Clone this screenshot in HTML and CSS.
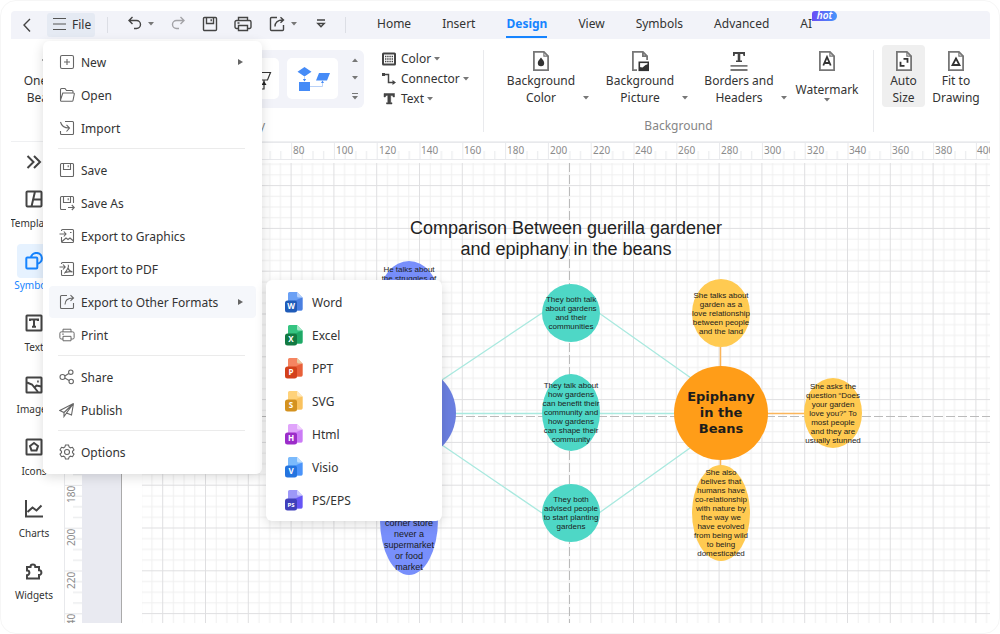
FILE: index.html
```html
<!DOCTYPE html>
<html lang="en">
<head>
<meta charset="utf-8">
<title>Diagram editor</title>
<link rel="stylesheet" href="styles.css">
</head>
<body>
<svg class="sprite" aria-hidden="true">
  <symbol id="save" viewBox="0 0 16 16"><path d="M1.5 2.5a1 1 0 0 1 1-1h11a1 1 0 0 1 1 1v11a1 1 0 0 1-1 1h-11a1 1 0 0 1-1-1zM4.5 1.5v6h7v-6M9.2 3.2v2"/></symbol>
  <symbol id="print" viewBox="0 0 18 16"><path d="M4.5 4.5v-3h9v3M4.5 12.5h-2a1.5 1.5 0 0 1-1.5-1.500v-5a1.500 1.500 0 0 1 1.500-1.500h13a1.500 1.500 0 0 1 1.500 1.500v5a1.500 1.500 0 0 1-1.500 1.500h-2M4.500 9.500h9v5h-9zM3.500 7h2"/></symbol>
  <symbol id="export" viewBox="0 0 16 16"><path d="M8 1.500H2.500a1 1 0 0 0-1 1v11a1 1 0 0 0 1 1h11a1 1 0 0 0 1-1V9M6 10.500C6 6.500 8.500 4 14 4M11.500 1.200 14.500 4l-3 2.800"/></symbol>
  <symbol id="doc" viewBox="0 0 18 22"><path fill="#fff" stroke="#777" stroke-width="1.800" d="M1.900 1.900h10l4.200 4.200v14H1.900z"/><path fill="none" stroke="#777" stroke-width="1.200" d="M11.900 2v4.200h4"/></symbol>
  <symbol id="caret" viewBox="0 0 6 4"><path d="M0 0h6L3 3.500z"/></symbol>
</svg>

<div class="shell">
  <header class="topbar">
    <button class="tool back" aria-label="Back"><svg viewBox="0 0 16 16"><path d="M11 2 5 8l6 6.500"/></svg></button>
    <button class="file"><svg class="line" viewBox="0 0 14 14"><path d="M0 1.500h13M0 7h13M0 12.500h13"/></svg>File</button>
    <span class="bar-sep"></span>
    <div class="quick">
      <div class="split">
        <button class="tool" aria-label="Undo"><svg viewBox="0 0 16 16"><path d="M5.500 1 2 4.500 5.500 8M2 4.500h7.500a4 4 0 0 1 0 8H7"/></svg></button>
        <button class="drop" aria-label="Undo history"><svg><use href="#caret"/></svg></button>
      </div>
      <button class="tool faded" aria-label="Redo"><svg viewBox="0 0 16 16"><path d="M10.500 1 14 4.500 10.500 8M14 4.500H6.500a4 4 0 0 0 0 8H9"/></svg></button>
      <button class="tool" aria-label="Save"><svg><use href="#save"/></svg></button>
      <button class="tool wide" aria-label="Print"><svg><use href="#print"/></svg></button>
      <div class="split">
        <button class="tool wide" aria-label="Export"><svg><use href="#export"/></svg></button>
        <button class="drop" aria-label="Export options"><svg><use href="#caret"/></svg></button>
      </div>
      <button class="tool" aria-label="More"><svg viewBox="0 0 16 16"><path d="M4 4h8M4.800 7.500h6.400L8 10.800z"/></svg></button>
    </div>
    <span class="bar-sep"></span>
    <nav class="tabs">
      <a href="#">Home</a><a href="#">Insert</a><a href="#" class="current">Design</a><a href="#">View</a><a href="#">Symbols</a><a href="#">Advanced</a><a href="#" class="ai">AI<span class="hot">hot</span></a>
    </nav>
  </header>

  <section class="ribbon">
    <div class="group beautify">
      <div class="group-body">
        <button class="big"><svg class="big-icon line" viewBox="0 0 18 22"><path d="M9 3v16M1 10h16"/></svg>One Click<br>Beautify</button>
        <div class="gallery">
          <span class="card"></span><span class="card"></span>
          <button class="card" aria-label="Outline style"><svg viewBox="0 0 51 41"><g fill="none" stroke="#333" stroke-width="1.200"><path d="M30 14.500h12.500l-3 7.500H27z"/><path d="M36 22v9H24"/></g><path d="M33.500 27 36 23l2.500 4z" fill="#222"/></svg></button>
          <button class="card" aria-label="Filled style"><svg viewBox="0 0 51 41"><path d="m17.500 9 7 4.700-7 4.700-7-4.700zM12 24h11v9H12zM32 15h11l-3 7.500H29z" fill="#458bf7"/><path d="M17.500 18v5M23 28.500h12.500V24" fill="none" stroke="#b9d1f7"/><path d="M15.800 21h3.400l-1.700 2.500zM34 25h3l-1.500-2.500z" fill="#458bf7"/></svg></button>
          <div class="scroller">
            <button class="drop" aria-label="Scroll up"><svg viewBox="0 0 6 4"><path d="M0 4h6L3 .5z"/></svg></button>
            <button class="drop" aria-label="Scroll down"><svg><use href="#caret"/></svg></button>
            <button class="drop tall" aria-label="Show all"><svg viewBox="0 0 6 7"><path d="M0 0h6v1H0zM0 3h6L3 6.500z"/></svg></button>
          </div>
        </div>
        <div class="lines">
          <button><svg class="row-icon" viewBox="0 0 14 14"><rect x="1" y="1.500" width="12" height="11" rx=".5" fill="#fff" stroke="#444" stroke-width="2"/><path d="M3 4.500h8M3 7h8M3 9.500h8" stroke="#444" stroke-width="1.300" stroke-dasharray="1.400 .8"/></svg>Color<svg class="caret"><use href="#caret"/></svg></button>
          <button><svg class="row-icon" viewBox="0 0 14 14"><path d="M3 2.500h3.500v8h5" fill="none" stroke="#444" stroke-width="1.500"/><path d="M0 1h3v3H0zM10.500 8l3.500 2.500-3.500 2.500z" fill="#444"/></svg>Connector<svg class="caret"><use href="#caret"/></svg></button>
          <button><svg class="row-icon" viewBox="0 0 14 14"><path d="M2 1.500h10.500V5h-1.300l-.7-1.500H8.700v7.200h1.300v1.300H4.500v-1.300h1.300V3.500H4L3.300 5H2z" fill="#444" stroke="#444" stroke-width=".5"/></svg>Text<svg class="caret"><use href="#caret"/></svg></button>
        </div>
      </div>
      <p class="group-name">Beautify</p>
    </div>

    <div class="group background">
      <div class="group-body">
        <button class="big with-drop"><svg class="big-icon"><use href="#doc"/><path d="M9 7.500c2 2.500 3.200 3.900 3.200 5.500a3.200 3.200 0 0 1-6.400 0c0-1.600 1.200-3 3.200-5.500z" fill="#333"/></svg><span>Background<br>Color</span><svg class="caret"><use href="#caret"/></svg></button>
        <button class="big with-drop"><svg class="big-icon" viewBox="0 0 18 22"><path d="M6 20.100H1.900V1.900h10l4.200 4.200V10M11.900 2v4.200h4" fill="none" stroke="#777" stroke-width="1.800"/><rect x="8.300" y="12.300" width="9" height="8" fill="#fff" stroke="#333" stroke-width="1.600"/><path d="M8.500 20v-3l3 .5 3-2.500 3-1v6z" fill="#333"/></svg><span>Background<br>Picture</span><svg class="caret"><use href="#caret"/></svg></button>
        <button class="big with-drop"><svg class="big-icon" viewBox="0 0 18 22"><path d="M3 2h12v4h-1.500L13 4h-2.700v6.500H12V12H6v-1.500h1.700V4H5l-.5 2H3z" fill="#444"/><path d="M.5 15.800h17M.5 20h17" stroke="#777" stroke-width="1.800"/></svg><span>Borders and<br>Headers</span><svg class="caret"><use href="#caret"/></svg></button>
        <button class="big watermark"><svg class="big-icon"><use href="#doc"/><path d="M5.300 15.500 9 7l3.700 8.500M6.500 13h5" fill="none" stroke="#333" stroke-width="1.800"/></svg><span>Watermark</span><svg class="caret"><use href="#caret"/></svg></button>
      </div>
      <p class="group-name">Background</p>
    </div>

    <div class="group size">
      <div class="group-body">
        <button class="big pressed"><svg class="big-icon"><use href="#doc"/><path d="M8.500 8.800h4v4M5.500 11.800v4h4" fill="none" stroke="#333" stroke-width="1.800"/></svg>Auto<br>Size</button>
        <button class="big"><svg class="big-icon"><use href="#doc"/><path d="M9 8.500 12.500 15h-7z" fill="none" stroke="#333" stroke-width="1.800"/></svg>Fit to<br>Drawing</button>
      </div>
    </div>
  </section>

  <main class="work">
    <aside class="side">
      <button class="expand" aria-label="Expand"><svg viewBox="0 0 16 14"><path d="m1.500 1 6 6-6 6M8 1l6 6-6 6"/></svg></button>
      <button class="side-item"><span class="side-icon"><svg viewBox="0 0 18 18"><path d="M1.500 2.500a1 1 0 0 1 1-1h13a1 1 0 0 1 1 1v13a1 1 0 0 1-1 1h-13a1 1 0 0 1-1-1zM10 1.500 6.500 16.500M8.500 9.500h8"/></svg></span>Templates</button>
      <button class="side-item active"><span class="side-icon"><svg viewBox="0 0 18 18"><rect x="1.300" y="5.500" width="11" height="11" rx="1"/><path d="M6 5.200a5.500 5.500 0 1 1 6.500 6.600"/></svg></span>Symbols</button>
      <button class="side-item"><span class="side-icon"><svg viewBox="0 0 18 18"><rect x="1.500" y="1.500" width="15" height="15" rx=".5"/><path d="M5 7V5.500h8V7M9 5.500v7M7 12.700h4"/></svg></span>Text</button>
      <button class="side-item"><span class="side-icon"><svg viewBox="0 0 18 18"><rect x="1.500" y="1.500" width="15" height="15" rx=".5"/><path d="m2 6.500 5 2 6 7.500M9 12l2.500-2.500 5 1M12.200 5.500h1.500"/></svg></span>Images</button>
      <button class="side-item"><span class="side-icon"><svg viewBox="0 0 18 18"><rect x="1.500" y="1.500" width="15" height="15" rx=".5"/><path d="m9 5 4 3-1.500 4.500h-5L5 8z"/></svg></span>Icons</button>
      <button class="side-item"><span class="side-icon"><svg viewBox="0 0 18 18"><path d="M1 0v16.500h17M2.500 12l5-4.500 4 3 5-5"/></svg></span>Charts</button>
      <button class="side-item"><span class="side-icon"><svg viewBox="0 0 18 18"><path d="M2 5h3.500a2.400 2.400 0 1 1 4.800 0H14v3.300a2.400 2.400 0 1 1 0 4.800v3.400H2v-3.300a2.400 2.400 0 1 0 0-4.800z"/></svg></span>Widgets</button>
    </aside>

    <div class="editor">
      <svg class="ruler-x">
        <defs><pattern id="tx" width="42.800" height="18" patternUnits="userSpaceOnUse" x="13.100"><path d="M.5 0v18M11.200 9v9M21.900 9v9M32.600 9v9" stroke="#e8e9ec"/></pattern></defs>
        <rect width="100%" height="18" fill="url(#tx)"/><path class="edge" d="M0 .5h2000M0 17.500h2000"/>
        <g><text x="229" y="12">80</text><text x="272" y="12">100</text><text x="315" y="12">120</text><text x="357" y="12">140</text><text x="400" y="12">160</text><text x="443" y="12">180</text><text x="486" y="12">200</text><text x="529" y="12">220</text><text x="571" y="12">240</text><text x="614" y="12">260</text><text x="657" y="12">280</text><text x="700" y="12">300</text><text x="743" y="12">320</text><text x="785" y="12">340</text><text x="828" y="12">360</text><text x="871" y="12">380</text><text x="913" y="12">400</text></g>
      </svg>
      <svg class="ruler-y">
        <defs><pattern id="ty" width="18" height="42.800" patternUnits="userSpaceOnUse" y="25.300"><path d="M0 .5h18M9 11.200h9M9 21.900h9M9 32.600h9" stroke="#e4e5e8"/></pattern></defs>
        <rect width="18" height="100%" fill="url(#ty)"/><path class="edge" d="M.5 0v2000"/>
        <text transform="translate(11 343) rotate(-90)">180</text><text transform="translate(11 386) rotate(-90)">200</text><text transform="translate(11 429) rotate(-90)">220</text><text transform="translate(11 471) rotate(-90)">240</text>
      </svg>
      <div class="canvas">
        <svg class="drawing">
          <defs>
            <pattern id="grid" width="42.800" height="42.800" patternUnits="userSpaceOnUse" x="37.400" y="25.100"><path d="M11.200 0v42.800M21.900 0v42.800M32.600 0v42.800M0 11.200h42.800M0 21.900h42.800M0 32.600h42.800" stroke="#efeff0"/><path d="M.5 0v42.800M0 .5h42.800" stroke="#dfdfe1"/></pattern>
          </defs>
          <rect width="39" height="100%" fill="#e9eaf1"/><path d="M39.500 0v2000" stroke="#aaa"/>
          <rect x="60" y="3" width="100%" height="100%" fill="url(#grid)"/>
          <path d="M487.500 3v2000M60 256.500h2000" stroke="#bbb" stroke-dasharray="9 3" fill="none"/>
          <g transform="translate(-82 -160)" fill="none">
            <path stroke="#a9e9df" stroke-width="1.300" d="M599 313l92 65M542 313l-100 67M599 513l91-65M542 513l-100-68M456 413.500h218"/>
            <path stroke="#fbb55a" stroke-width="1.500" d="M720.500 347v20M720.500 459v7M767 413.500h38"/>
          </g>
        </svg>
        <h1 class="title">Comparison Between guerilla gardener<br>and epiphany in the beans</h1>
        <div class="node blue n-top">He talks about<br>the struggles of</div>
        <div class="node core n-left"></div>
        <div class="node blue n-low">corner store<br>never a<br>supermarket<br>or food<br>market</div>
        <div class="node teal n-t1">They both talk<br>about gardens<br>and their<br>communities</div>
        <div class="node teal n-t2">They talk about<br>how gardens<br>can benefit their<br>community and<br>how gardens<br>can shape their<br>community</div>
        <div class="node teal n-t3">They both<br>advised people<br>to start planting<br>gardens</div>
        <div class="node yellow n-y1">She talks about<br>garden as a<br>love relationship<br>between people<br>and the land</div>
        <div class="node yellow n-y2">She asks the<br>question “Does<br>your garden<br>love you?” To<br>most people<br>and they are<br>usually stunned</div>
        <div class="node yellow n-y3">She also<br>belives that<br>humans have<br>co-relationship<br>with nature by<br>the way we<br>have evolved<br>from being wild<br>to being<br>domesticated</div>
        <div class="node core n-right">Epiphany<br>in the<br>Beans</div>
      </div>
    </div>
  </main>

  <div class="menu file-menu">
    <button><svg viewBox="0 0 16 16"><rect x="1.500" y="1.500" width="13" height="13" rx="1.500"/><path d="M8 5v6M5 8h6"/></svg>New<i></i></button>
    <button><svg viewBox="0 0 16 16"><path d="M1.500 13V2.500a1 1 0 0 1 1-1h3.500l1.500 2h5.500a1 1 0 0 1 1 1V6M3.800 6h10.700a.8.8 0 0 1 .8 1l-1.300 6.500a1 1 0 0 1-1 .8H2.500a1 1 0 0 1-1-1.200z"/></svg>Open</button>
    <button><svg viewBox="0 0 16 16"><path d="M6 1.500h7.500a1 1 0 0 1 1 1v11a1 1 0 0 1-1 1h-11a1 1 0 0 1-1-1V11M1.500 2c1 4 3.500 6 8.500 6M7.500 4.800 10.500 8l-3 3.500"/></svg>Import</button>
    <hr>
    <button><svg><use href="#save"/></svg>Save</button>
    <button><svg viewBox="0 0 16 16"><path d="M7 14.500H2.500a1 1 0 0 1-1-1v-11a1 1 0 0 1 1-1h11a1 1 0 0 1 1 1V8M4.500 1.500v6h7v-6M9.200 3.200v2M9 12.500h6M12.800 10l2.500 2.500-2.500 2.500"/></svg>Save As</button>
    <button><svg viewBox="0 0 16 16"><path d="M2.500 3v-.5a1 1 0 0 1 1-1h10a1 1 0 0 1 1 1v11a1 1 0 0 1-1 1h-10a1 1 0 0 1-1-1V9M.5 6H7M4.800 3.500 7 6 4.800 8.500M3 13.500l4-3.500 2 1.500 2-1.500 3.500 3M11 4.500h1.500"/></svg>Export to Graphics</button>
    <button><svg viewBox="0 0 16 16"><path d="M2.500 3v-.5a1 1 0 0 1 1-1h10a1 1 0 0 1 1 1v11a1 1 0 0 1-1 1h-10a1 1 0 0 1-1-1V9M.5 6H6M4 3.500 6.200 6 4 8.500M8.800 4c1.500 0 .5 4-3.500 8.500M9 7c.5 2 2.500 3.500 4.500 4-2-.8-4.500-.3-7 .5"/></svg>Export to PDF</button>
    <button class="hover"><svg><use href="#export"/></svg>Export to Other Formats<i></i></button>
    <button><svg><use href="#print"/></svg>Print</button>
    <hr>
    <button><svg viewBox="0 0 16 16"><circle cx="3.500" cy="8" r="2.500"/><circle cx="11.800" cy="3.200" r="2.200"/><circle cx="12.200" cy="12.500" r="2.200"/><path d="m5.800 7 4-2.500M5.800 9l4.300 2.500"/></svg>Share</button>
    <button><svg viewBox="0 0 16 16"><path d="M14.500 1.500.8 8.500 5 10.500zM14.500 1.500l-2 11.500-5-2zM14.500 1.500 5 10.500v4l2.500-3.500"/></svg>Publish</button>
    <hr>
    <button><svg viewBox="0 0 16 16"><path d="m6.500 1h3l.6 2 1.300.8 2.100-.5 1.500 2.600L13.500 7.300v1.400l1.500 1.400-1.500 2.600-2.100-.5-1.300.8-.6 2h-3l-.6-2-1.300-.8-2.100.5L1 10.100l1.500-1.400V7.300L1 5.900l1.500-2.600 2.100.5L5.900 3z"/><circle cx="8" cy="8" r="2.500"/></svg>Options</button>
  </div>

  <div class="menu formats">
    <button class="f-word"><svg viewBox="0 0 18 22"><path class="a" d="M4.500 1H12l5.500 5.500V18a1.500 1.500 0 0 1-1.500 1.500H4.500A1.500 1.500 0 0 1 3 18V2.500A1.500 1.500 0 0 1 4.500 1z"/><path class="b" d="M17.500 6.500V18a1.500 1.500 0 0 1-1.500 1.500H9V10z"/><path class="c" d="M12 1v4a1.500 1.500 0 0 0 1.500 1.500h4z"/><rect class="d" y="9.500" width="12" height="12" rx="2.500"/><text x="6" y="18">W</text></svg>Word</button>
    <button class="f-excel"><svg viewBox="0 0 18 22"><path class="a" d="M4.500 1H12l5.500 5.500V18a1.500 1.500 0 0 1-1.500 1.500H4.500A1.500 1.500 0 0 1 3 18V2.500A1.500 1.500 0 0 1 4.500 1z"/><path class="b" d="M17.500 6.500V18a1.500 1.500 0 0 1-1.500 1.500H9V10z"/><path class="c" d="M12 1v4a1.500 1.500 0 0 0 1.500 1.500h4z"/><rect class="d" y="9.500" width="12" height="12" rx="2.500"/><text x="6" y="18">X</text></svg>Excel</button>
    <button class="f-ppt"><svg viewBox="0 0 18 22"><path class="a" d="M4.500 1H12l5.500 5.500V18a1.500 1.500 0 0 1-1.500 1.500H4.500A1.500 1.500 0 0 1 3 18V2.500A1.500 1.500 0 0 1 4.500 1z"/><path class="b" d="M17.500 6.500V18a1.500 1.500 0 0 1-1.500 1.500H9V10z"/><path class="c" d="M12 1v4a1.500 1.500 0 0 0 1.500 1.500h4z"/><rect class="d" y="9.500" width="12" height="12" rx="2.500"/><text x="6" y="18">P</text></svg>PPT</button>
    <button class="f-svg"><svg viewBox="0 0 18 22"><path class="a" d="M4.500 1H12l5.500 5.500V18a1.500 1.500 0 0 1-1.500 1.500H4.500A1.500 1.500 0 0 1 3 18V2.500A1.500 1.500 0 0 1 4.500 1z"/><path class="b" d="M17.500 6.500V18a1.500 1.500 0 0 1-1.500 1.500H9V10z"/><path class="c" d="M12 1v4a1.500 1.500 0 0 0 1.500 1.500h4z"/><rect class="d" y="9.500" width="12" height="12" rx="2.500"/><text x="6" y="18">S</text></svg>SVG</button>
    <button class="f-html"><svg viewBox="0 0 18 22"><path class="a" d="M4.500 1H12l5.500 5.500V18a1.500 1.500 0 0 1-1.500 1.500H4.500A1.500 1.500 0 0 1 3 18V2.500A1.500 1.500 0 0 1 4.500 1z"/><path class="b" d="M17.500 6.500V18a1.500 1.500 0 0 1-1.500 1.500H9V10z"/><path class="c" d="M12 1v4a1.500 1.500 0 0 0 1.500 1.500h4z"/><rect class="d" y="9.500" width="12" height="12" rx="2.500"/><text x="6" y="18">H</text></svg>Html</button>
    <button class="f-visio"><svg viewBox="0 0 18 22"><path class="a" d="M4.500 1H12l5.500 5.500V18a1.500 1.500 0 0 1-1.500 1.500H4.500A1.500 1.500 0 0 1 3 18V2.500A1.500 1.500 0 0 1 4.500 1z"/><path class="b" d="M17.500 6.500V18a1.500 1.500 0 0 1-1.500 1.500H9V10z"/><path class="c" d="M12 1v4a1.500 1.500 0 0 0 1.500 1.500h4z"/><rect class="d" y="9.500" width="12" height="12" rx="2.500"/><text x="6" y="18">V</text></svg>Visio</button>
    <button class="f-ps"><svg viewBox="0 0 18 22"><path class="a" d="M4.500 1H12l5.500 5.500V18a1.500 1.500 0 0 1-1.500 1.500H4.500A1.500 1.500 0 0 1 3 18V2.500A1.500 1.500 0 0 1 4.500 1z"/><path class="b" d="M17.500 6.500V18a1.500 1.500 0 0 1-1.500 1.500H9V10z"/><path class="c" d="M12 1v4a1.500 1.500 0 0 0 1.500 1.500h4z"/><rect class="d" y="9.500" width="12" height="12" rx="2.500"/><text class="small" x="6" y="18">PS</text></svg>PS/EPS</button>
  </div>
</div>
</body>
</html>
```
FILE: styles.css
```css
* { box-sizing: border-box; }
body { margin: 0; background: #fff; color: #333; font: 12px/17px "Noto Sans", "Open Sans", sans-serif; }
button { padding: 0; border: 0; background: none; color: inherit; font: inherit; cursor: pointer; }
a { color: inherit; text-decoration: none; }
svg { display: block; flex: none; }
.sprite { position: absolute; width: 0; height: 0; }

.shell { position: relative; display: flex; flex-direction: column; height: 100vh; min-height: 400px; padding: 10px 9px 10px 10px; border: 1px solid #f6f6f6; border-radius: 16px; overflow: hidden; }

/* Top bar */
.topbar { display: flex; flex: none; align-items: center; height: 28px; padding-left: 8px; border-radius: 4px 4px 0 0; background: #f2f3f9; }
.tool { width: 16px; height: 16px; }
.tool.wide { width: 18px; }
.tool svg { width: 100%; height: 16px; fill: none; stroke: #444; stroke-width: 1.4; }
.tool.faded { opacity: .45; }
.line { fill: none; stroke: #555; stroke-width: 1.2; }
.drop { width: 6px; height: 4px; }
.drop svg, .caret { width: 6px; height: 4px; fill: #777; }
.drop.tall, .drop.tall svg { height: 7px; }
.back { margin-right: 12px; }
.quick, .back { padding-bottom: 2px; }
.file { display: flex; align-items: center; gap: 5px; width: 48px; height: 24px; padding: 0 0 2px 6px; border-radius: 3px; background: #e5eaf3; }
.file svg { width: 14px; height: 14px; }
.bar-sep { width: 1px; height: 16px; margin-left: 12px; background: #dcdee5; }
.quick { display: flex; align-items: center; gap: 16px; margin-left: 19px; }
.quick + .bar-sep { margin-left: 16px; }
.split { display: flex; align-items: center; gap: 5px; }
.tabs { display: flex; gap: 31px; height: 28px; margin-left: 31px; line-height: 25px; }
.tabs .current { height: 27px; border-bottom: 2px solid #1684ff; color: #1684ff; font-weight: 700; }
.ai { position: relative; }
.hot { position: absolute; left: 100%; top: 0; width: 25px; height: 10px; border-radius: 3px 5px 5px 0; background: linear-gradient(90deg, #6a4cf5, #4596fb); color: #fff; font-size: 10px; font-style: italic; font-weight: 600; line-height: 8px; text-align: center; }

/* Ribbon */
.ribbon { display: flex; flex: none; height: 103px; padding-top: 6px; border-bottom: 1px solid #eff0f2; }
.group { position: relative; display: flex; flex-direction: column; gap: 10px; }
.group + .group::before { content: ""; position: absolute; left: 0; top: 5px; width: 1px; height: 82px; background: #e9eaed; }
.group-body { display: flex; height: 62px; }
.group-name { margin: 0; color: #858585; text-align: center; }
.beautify { width: 472px; }
.beautify .group-name { padding-right: 10px; }
.beautify .group-body { gap: 11px; }
.big { display: flex; flex-direction: column; align-items: center; width: 60px; padding-top: 5px; }
.big-icon { width: 18px; height: 22px; }
.beautify .big { width: 78px; }
.gallery { display: flex; gap: 8px; width: 264px; height: 58px; margin-top: 5px; padding: 8px 10px; border-radius: 6px; background: #f2f3f9; }
.card { flex: none; width: 51px; height: 41px; border-radius: 5px; background: #fff; }
.card svg { width: 51px; height: 41px; }
.scroller { display: flex; flex-direction: column; justify-content: space-between; padding-left: 6px; }
.lines { display: flex; flex-direction: column; gap: 3px; margin: 5px 0 0 7px; }
.lines button { display: flex; align-items: center; }
.row-icon { width: 14px; height: 14px; margin-right: 5px; }
.lines .caret { margin-left: 3px; }
.background { width: 390px; padding-left: 17px; }
.background .group-body { gap: 9px; }
.background .group-name { padding-right: 16px; }
.with-drop { display: grid; grid-template-columns: 82px 8px; align-content: start; justify-items: center; width: 90px; }
.with-drop .big-icon { grid-column: 1; }
.with-drop span { grid-column: 1; }
.with-drop .caret { align-self: end; margin-bottom: 6px; }
.watermark span { margin-top: 9px; }
.size { flex: 1; padding-left: 9px; }
.size .group-body { gap: 1px; }
.pressed { width: 43px; border-radius: 4px; background: #efefef; }

/* Workspace */
.work { display: flex; flex: 1; min-height: 0; }
.side { display: flex; flex: none; flex-direction: column; gap: 14px; align-items: center; width: 53px; padding: 6px 7px 0 0; overflow: hidden; }
.expand { height: 28px; margin-bottom: -8px; }
.expand svg { width: 16px; height: 14px; fill: none; stroke: #444; stroke-width: 2; }
.side-item { display: flex; flex: none; flex-direction: column; align-items: center; font-size: 10px; line-height: 14px; }
.side-icon { display: grid; place-items: center; width: 34px; height: 34px; border-radius: 4px; }
.side-icon svg { width: 18px; height: 18px; fill: none; stroke: #444; stroke-width: 2; }
.active { color: #1684ff; }
.active .side-icon { background: #e6f2ff; }
.active svg { stroke: #1684ff; }
.editor { display: grid; flex: 1; grid-template: 18px 1fr / 18px 1fr; min-width: 0; overflow: hidden; }
.editor text { fill: #8b8b8b; font-size: 10px; }
.edge { stroke: #e8e9ec; }
.ruler-x { grid-column: 1 / 3; width: 100%; height: 18px; }
.ruler-y { width: 18px; height: 100%; }
.canvas { position: relative; overflow: hidden; }
.drawing { position: absolute; inset: 0; width: 100%; height: 100%; }
.title { position: absolute; left: 324px; top: 58px; width: 320px; margin: 0; color: #222; font: 18px/21px "Liberation Sans", Arial, sans-serif; text-align: center; white-space: nowrap; }
.node { position: absolute; display: grid; place-content: center; width: 58px; border-radius: 50%; color: #1c1c1c; font: 8px/9px "Liberation Sans", Arial, sans-serif; text-align: center; white-space: nowrap; }
.teal { left: 460px; height: 58px; background: #4ed7c6; }
.yellow { left: 610px; background: #ffca51; }
.blue { left: 298px; background: #788ffb; }
.core { width: 94px; height: 94px; top: 206px; background: #ff9d18; font: 700 13px/16px "DejaVu Sans", Verdana, sans-serif; }
.n-top { top: 101px; height: 70px; align-content: start; padding-top: 4px; }
.n-left { left: 280px; background: #6b7fe0; }
.n-low { top: 305px; height: 110px; align-content: end; padding-bottom: 2px; font-size: 9px; line-height: 11px; }
.n-t1 { top: 124px; }
.n-t2 { top: 214px; height: 77px; }
.n-t3 { top: 324px; }
.n-y1 { top: 119px; height: 68px; }
.n-y2 { left: 722px; top: 218px; height: 70px; }
.n-y3 { top: 305px; height: 96px; }
.n-right { left: 592px; }

/* Menus */
.menu { position: absolute; display: flex; flex-direction: column; gap: 1px; padding: 6px 6px 5px; border-radius: 6px; background: #fff; box-shadow: 0 3px 12px rgba(0, 0, 0, .14); }
.menu button { display: flex; align-items: center; height: 32px; border-radius: 4px; text-align: left; }
.menu hr { height: 1px; margin: 3px 11px 4px 9px; border: 0; background: #ebebeb; }
.menu i { width: 0; height: 0; margin-left: auto; border: solid transparent; border-width: 3px 0 3px 5px; border-left-color: #666; }
.file-menu { left: 42px; top: 40px; width: 219px; padding: 5px 6px 6px; }
.file-menu button { gap: 6px; padding: 0 13px 0 10px; }
.file-menu svg { width: 16px; height: 16px; fill: none; stroke: #666; stroke-width: 1.1; }
.file-menu .hover { background: #f5f7fb; }
.formats { left: 265px; top: 279px; width: 176px; }
.formats button { gap: 9px; padding-left: 13px; }
.formats svg { width: 18px; height: 22px; }
.formats text { fill: #fff; font: 700 8px "Noto Sans", sans-serif; text-anchor: middle; }
.formats .small { font-size: 6px; }
.f-word .a { fill: #6aa0f5; } .f-word .b { fill: #4a7fe0; } .f-word .c { fill: #b5d0fb; } .f-word .d { fill: #1f5bb8; }
.f-excel .a { fill: #35c481; } .f-excel .b { fill: #1fa866; } .f-excel .c { fill: #a5e8c8; } .f-excel .d { fill: #127a42; }
.f-ppt .a { fill: #f58561; } .f-ppt .b { fill: #e8603a; } .f-ppt .c { fill: #e8cba2; } .f-ppt .d { fill: #d3401a; }
.f-svg .a { fill: #ffd27a; } .f-svg .b { fill: #fac25e; } .f-svg .c { fill: #ffe8bd; } .f-svg .d { fill: #d4921f; }
.f-html .a { fill: #e0a4fb; } .f-html .b { fill: #cb7cf6; } .f-html .c { fill: #f0d2fd; } .f-html .d { fill: #9c2cc9; }
.f-visio .a { fill: #7bbafc; } .f-visio .b { fill: #4b93fa; } .f-visio .c { fill: #c2e0fe; } .f-visio .d { fill: #2474df; }
.f-ps .a { fill: #9d98f8; } .f-ps .b { fill: #6655f6; } .f-ps .c { fill: #cfcdfd; } .f-ps .d { fill: #4040bb; }
```
